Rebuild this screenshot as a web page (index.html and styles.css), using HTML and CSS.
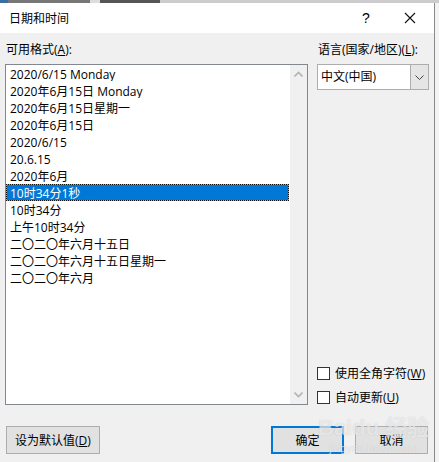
FILE: index.html
```html
<!DOCTYPE html>
<html lang="zh-CN">
<head>
    <meta charset="UTF-8">
    <meta name="viewport" content="width=device-width, initial-scale=1.0">
    <title>日期和时间</title>
    <link rel="stylesheet" href="styles.css">
</head>
<body>

    <div class="app-strip"></div>

    <div class="dialog">
        <div class="titlebar">
            <span class="title">日期和时间</span>
            <span class="help">?</span>
            <span class="close">
                <svg width="12" height="12" viewBox="0 0 12 12"><path d="M1 1L11 11M11 1L1 11" stroke="#111" stroke-width="1.1" fill="none"/></svg>
            </span>
        </div>

        <div class="content">
            <div class="left">
                <div class="label">可用格式(<u>A</u>):</div>
                <div class="listbox">
                    <ul class="items">
                        <li>2020/6/15 Monday</li>
                        <li>2020年6月15日 Monday</li>
                        <li>2020年6月15日星期一</li>
                        <li>2020年6月15日</li>
                        <li>2020/6/15</li>
                        <li>20.6.15</li>
                        <li>2020年6月</li>
                        <li class="selected">10时34分1秒</li>
                        <li>10时34分</li>
                        <li>上午10时34分</li>
                        <li>二〇二〇年六月十五日</li>
                        <li>二〇二〇年六月十五日星期一</li>
                        <li>二〇二〇年六月</li>
                    </ul>
                    <div class="scrollbar">
                        <svg width="9" height="6" viewBox="0 0 9 6"><path d="M0.5 5.5L4.5 1.5L8.5 5.5" stroke="#b4b4b4" stroke-width="1.6" fill="none"/></svg>
                        <svg width="9" height="6" viewBox="0 0 9 6"><path d="M0.5 0.5L4.5 4.5L8.5 0.5" stroke="#b4b4b4" stroke-width="1.6" fill="none"/></svg>
                    </div>
                </div>
            </div>

            <div class="right">
                <div class="label">语言(国家/地区)(<u>L</u>):</div>
                <div class="select">
                    <span class="select-value">中文(中国)</span>
                    <span class="select-btn">
                        <svg width="9" height="5" viewBox="0 0 9 5"><path d="M0.5 0.5L4.5 4.5L8.5 0.5" stroke="#444" stroke-width="1" fill="none"/></svg>
                    </span>
                </div>
                <div class="checks">
                    <label class="check"><span class="box"></span>使用全角字符(<u>W</u>)</label>
                    <label class="check"><span class="box"></span>自动更新(<u>U</u>)</label>
                </div>
            </div>
        </div>

        <div class="buttons">
            <button class="btn">设为默认值(<u>D</u>)</button>
            <div class="btn-group">
                <button class="btn default">确定</button>
                <button class="btn">取消</button>
            </div>
        </div>

        <div class="watermark">
            <span class="wm-big">Bai<span class="wm-paw">du</span> 经验</span>
            <span class="wm-small">jingyan.baidu.com</span>
        </div>
    </div>

</body>
</html>
```

FILE: styles.css
```css
body {
    margin: 0;
    width: 439px;
    height: 462px;
    overflow: hidden;
    background-color: #f3f3f3;
    font-family: "Open Sans", "Noto Sans CJK SC", sans-serif;
    font-size: 12px;
    color: #000;
}
u {
    text-decoration-thickness: 1px;
    text-underline-offset: 1px;
}
.app-strip {
    height: 3px;
    background: linear-gradient(90deg, #3a6ea5 0 8px, #777 8px 90px, #ddd 90px 100px, #555 100px 160px, #ccc 160px);
}
.dialog {
    position: relative;
    width: 434px;
    height: 459px;
    background-color: #f0f0f0;
    border-right: 1px solid #8a8a8a;
    display: flex;
    flex-direction: column;
}
.titlebar {
    height: 30px;
    background-color: #fff;
    display: flex;
    align-items: center;
    padding-left: 9px;
}
.title {
    flex: 1;
    font-size: 12px;
}
.help {
    width: 20px;
    margin-right: 22px;
    font-family: "Liberation Sans", sans-serif;
    font-size: 14px;
    text-align: center;
}
.close {
    width: 24px;
    margin-right: 12px;
    display: flex;
    justify-content: center;
}
.content {
    display: flex;
    padding: 9px 0 0 5px;
    flex: 1;
}
.label {
    height: 22px;
    line-height: 16px;
    padding-left: 1px;
}
.left {
    width: 303px;
}
.listbox {
    height: 339px;
    border: 1px solid #828790;
    background-color: #fff;
    display: flex;
}
.items {
    list-style: none;
    margin: 0;
    padding: 0;
    flex: 1;
}
.items li {
    height: 17px;
    line-height: 17px;
    padding-left: 3px;
    margin-right: 1px;
    white-space: nowrap;
    overflow: hidden;
    border: 1px solid transparent;
    box-sizing: border-box;
}
.items li.selected {
    color: #fff;
    border: 1px dotted #111;
    background: linear-gradient(#0078d7, #0078d7) padding-box, #f0962d border-box;
}
.scrollbar {
    width: 17px;
    background-color: #f0f0f0;
    display: flex;
    flex-direction: column;
    justify-content: space-between;
    align-items: center;
    padding: 6px 0 6px;
}
.right {
    margin-left: 9px;
    width: 112px;
    display: flex;
    flex-direction: column;
}
.select {
    height: 26px;
    border: 1px solid #adadad;
    background-color: #fff;
    display: flex;
    box-sizing: border-box;
}
.select-value {
    flex: 1;
    line-height: 24px;
    padding-left: 3px;
}
.select-btn {
    width: 17px;
    border-left: 1px solid #adadad;
    background-color: #e5e5e5;
    display: flex;
    align-items: center;
    justify-content: center;
}
.checks {
    margin-top: auto;
    margin-bottom: 6px;
    display: flex;
    flex-direction: column;
    gap: 10px;
}
.check {
    display: flex;
    align-items: center;
    height: 14px;
}
.box {
    width: 11px;
    height: 11px;
    border: 1px solid #333;
    background-color: #fff;
    margin-right: 5px;
}
.buttons {
    display: flex;
    justify-content: space-between;
    padding: 16px 6px 8px 6px;
}
.btn-group {
    display: flex;
    gap: 11px;
}
.btn {
    font-family: inherit;
    font-size: 12px;
    height: 28px;
    padding: 0 8px;
    background-color: #e1e1e1;
    border: 1px solid #adadad;
    color: #000;
    box-sizing: border-box;
}
.btn-group .btn {
    width: 73px;
}
.btn.default {
    border: 2px solid #0078d7;
}
.watermark {
    position: absolute;
    left: 318px;
    top: 412px;
    display: flex;
    flex-direction: column;
    align-items: center;
    color: rgba(255, 255, 255, 0.6);
    text-shadow: 0 0 1px rgba(120, 120, 120, 0.35);
    pointer-events: none;
}
.wm-big {
    font-family: "Liberation Sans", "Noto Sans CJK SC", sans-serif;
    font-size: 22px;
    font-weight: bold;
    line-height: 26px;
}
.wm-small {
    font-family: "Liberation Sans", sans-serif;
    font-size: 11px;
    line-height: 14px;
}
```
